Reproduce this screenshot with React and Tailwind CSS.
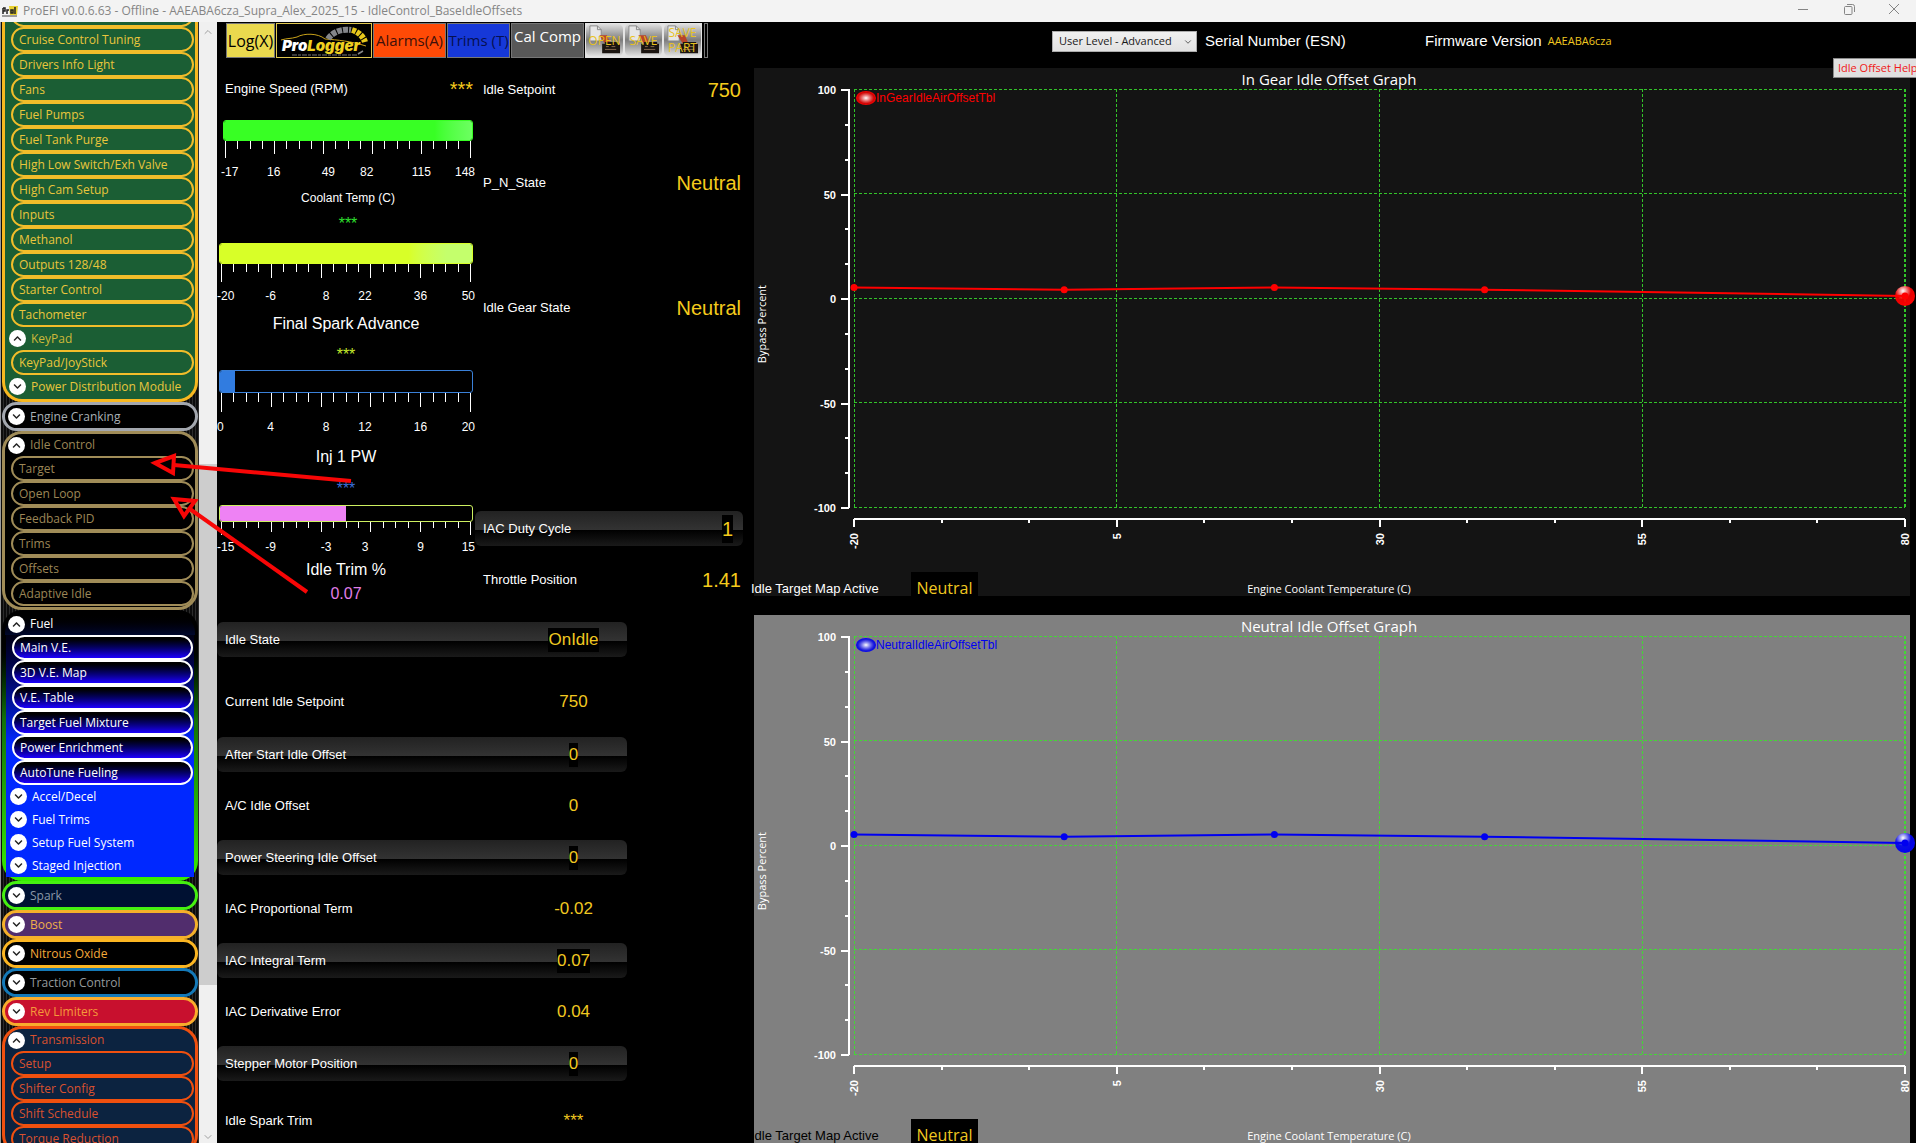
import React, { useState } from "react";
import clsx from "clsx";
import { FaChevronDown, FaChevronUp } from "react-icons/fa";
import { ChevronDown, ChevronUp } from "lucide-react";

const SEGOE = "font-['Open_Sans','Noto_Sans',sans-serif]";
const ARIAL = "font-['Liberation_Sans',Arial,sans-serif]";

const GREEN = {
  box: "border-[#f8b820] bg-[#1b5e34]",
  header: "text-[#cdb93a]",
  pill: "border-[#f2bd2a] text-[#e9c63c]",
};
const TAN = {
  box: "border-[#a08c58] bg-black",
  header: "text-[#9c8656]",
  pill: "border-[#a08c58] text-[#9c8656]",
};
const FUEL = {
  header: "text-white",
  pill: "border-white bg-linear-to-b from-black to-[#1c00ff] text-white",
};
const TRANS = {
  box: "border-[#f0500f] bg-[#0c2340]",
  header: "text-[#d9512f]",
  pill: "border-[#f0500f] text-[#d9512f]",
};

const TEMPS = [-20, 5, 30, 55, 80];
const IDLE_OFFSETS = [
  [-20, 5],
  [0, 4],
  [20, 5],
  [40, 4],
  [80, 1],
];

const GAUGES = [
  {
    title: "Coolant Temp (C)",
    value: "***",
    labels: ["-17", "16", "49", "82", "115", "148"],
    fill: 100,
    inset: "ml-1.5 mr-0.5",
    bar: "h-[21px] border-[#38ff24]",
    fillColor: "bg-linear-to-r from-[#38ff24] from-85% to-[#6cff60]",
    ticks: 17,
    labelRow: "h-7 pl-1",
    titleRow: "h-6 pl-1 text-xs",
    valueRow: "h-7 mb-[5px] pl-1 text-[#2fe02f]",
  },
  {
    title: "Final Spark Advance",
    value: "***",
    labels: ["-20", "-6", "8", "22", "36", "50"],
    fill: 100,
    inset: "mx-0.5",
    bar: "h-[21px] border-[#d8ff28]",
    fillColor: "bg-linear-to-r from-[#d8ff28] from-75% to-[#c4ff6c] to-90%",
    ticks: 18,
    labelRow: "h-[27px]",
    titleRow: "h-[30px] text-base",
    valueRow: "h-[31px] text-[#c4e82c]",
  },
  {
    title: "Inj 1 PW",
    value: "***",
    labels: ["0", "4", "8", "12", "16", "20"],
    fill: 6,
    inset: "mx-0.5",
    bar: "h-[23px] border-[#3a80d8]",
    fillColor: "bg-[#317ce0]",
    ticks: 19,
    labelRow: "h-[30px]",
    titleRow: "h-[30px] text-base",
    valueRow: "h-[33px] text-[#3a6fd8]",
  },
  {
    title: "Idle Trim %",
    value: "0.07",
    labels: ["-15", "-9", "-3", "3", "9", "15"],
    fill: 50,
    inset: "mx-0.5",
    bar: "h-[17px] border-[#cdf060]",
    fillColor: "bg-[#ee82f4]",
    ticks: 13,
    labelRow: "h-[23px]",
    titleRow: "h-6 text-base",
    valueRow: "h-6 text-[#e07ee8]",
  },
];

const READOUTS = [
  { label: "Idle State", value: "OnIdle", band: true },
  { label: "Current Idle Setpoint", value: "750", height: "h-20 pt-2.5" },
  { label: "After Start Idle Offset", value: "0", band: true },
  { label: "A/C Idle Offset", value: "0", height: "h-17" },
  { label: "Power Steering Idle Offset", value: "0", band: true },
  { label: "IAC Proportional Term", value: "-0.02", height: "h-17" },
  { label: "IAC Integral Term", value: "0.07", band: true },
  { label: "IAC Derivative Error", value: "0.04", height: "h-17" },
  { label: "Stepper Motor Position", value: "0", band: true },
  { label: "Idle Spark Trim", value: "***", height: "h-20" },
];

const BAND =
  "bg-[linear-gradient(to_bottom,#222_0,#333_19px,#000_19px,#1a1a1a_100%)]";

const Circle = ({ open }) => (
  <span className="flex size-[17px] shrink-0 items-center justify-center rounded-full bg-white text-[#222]">
    {open ? <FaChevronUp size={9} /> : <FaChevronDown size={9} />}
  </span>
);

const Pill = ({ theme, children }) => (
  <button
    className={clsx(
      "ml-1.5 mr-px flex h-[25px] items-center rounded-full border-2 pl-1.5 text-left",
      theme.pill
    )}
  >
    {children}
  </button>
);

const SubHeader = ({ open, color, children }) => (
  <button
    aria-expanded={!!open}
    className={clsx("flex h-[23px] items-center gap-[5px] pl-1 text-left", color)}
  >
    <Circle open={open} />
    {children}
  </button>
);

const GroupHeader = ({ color, children }) => (
  <button
    aria-expanded="true"
    className={clsx(
      "flex h-[22px] shrink-0 items-center gap-[5px] pl-[3px] text-left",
      color
    )}
  >
    <Circle open />
    {children}
  </button>
);

const Collapsed = ({ color, children }) => (
  <button
    aria-expanded="false"
    className={clsx(
      "flex h-[29px] shrink-0 items-center gap-[5px] rounded-full border-3 pl-[3px] text-left",
      color
    )}
  >
    <Circle />
    {children}
  </button>
);

const Group = ({ theme, title, items }) => (
  <div
    className={clsx(
      "flex shrink-0 flex-col rounded-[20px] border-3 pb-px",
      theme.box
    )}
  >
    <GroupHeader color={theme.header}>{title}</GroupHeader>
    {items.map((item) => (
      <Pill key={item} theme={theme}>
        {item}
      </Pill>
    ))}
  </div>
);

const Sidebar = () => (
  <nav
    className={clsx(
      SEGOE,
      "flex w-[199px] shrink-0 flex-col overflow-hidden border-l border-[#9a9a9a] pl-px pr-px text-xs",
      "bg-[repeating-linear-gradient(to_right,#0c0c0c_0,#0c0c0c_2px,#2c2c2c_2px,#2c2c2c_3px)]"
    )}
  >
    <div
      className={clsx(
        "-mt-5 flex shrink-0 flex-col rounded-b-[20px] border-3 border-t-0 pb-px",
        GREEN.box
      )}
    >
      <Pill theme={GREEN} />
      {[
        "Cruise Control Tuning",
        "Drivers Info Light",
        "Fans",
        "Fuel Pumps",
        "Fuel Tank Purge",
        "High Low Switch/Exh Valve",
        "High Cam Setup",
        "Inputs",
        "Methanol",
        "Outputs 128/48",
        "Starter Control",
        "Tachometer",
      ].map((item) => (
        <Pill key={item} theme={GREEN}>
          {item}
        </Pill>
      ))}
      <SubHeader open color={GREEN.header}>
        KeyPad
      </SubHeader>
      <Pill theme={GREEN}>KeyPad/JoyStick</Pill>
      <SubHeader color="text-[#e9c63c]">Power Distribution Module</SubHeader>
    </div>

    <Collapsed color="border-[#a3a7ae] bg-black text-[#a9b0b6]">
      Engine Cranking
    </Collapsed>
    <Group
      theme={TAN}
      title="Idle Control"
      items={["Target", "Open Loop", "Feedback PID", "Trims", "Offsets", "Adaptive Idle"]}
    />

    {/* Fuel: the frame fades from black to green behind a square blue list */}
    <div className="flex shrink-0 flex-col rounded-[20px] bg-linear-to-b from-black from-10% via-[#127008] via-40% to-[#38f000] p-[3px] pb-1">
      <div className="rounded-t-[20px] bg-linear-to-b from-black to-[#00082c]">
        <GroupHeader color={FUEL.header}>Fuel</GroupHeader>
      </div>
      <div className="mx-px flex flex-col bg-linear-to-b from-[#000014] to-[#0028ff] to-45%">
        {[
          "Main V.E.",
          "3D V.E. Map",
          "V.E. Table",
          "Target Fuel Mixture",
          "Power Enrichment",
          "AutoTune Fueling",
        ].map((item) => (
          <Pill key={item} theme={FUEL}>
            {item}
          </Pill>
        ))}
        {["Accel/Decel", "Fuel Trims", "Setup Fuel System", "Staged Injection"].map(
          (item) => (
            <SubHeader key={item} color="text-white">
              {item}
            </SubHeader>
          )
        )}
      </div>
    </div>

    <Collapsed color="border-[#46f010] bg-[#001132] text-[#8b98a8]">Spark</Collapsed>
    <Collapsed color="border-[#f5b02a] bg-[#512d6d] text-[#efb04a]">Boost</Collapsed>
    <Collapsed color="border-[#fbb522] bg-black text-[#f5a93a]">Nitrous Oxide</Collapsed>
    <Collapsed color="border-[#1479b8] bg-black text-[#959a9c]">Traction Control</Collapsed>
    <Collapsed color="border-[#f9ac2c] bg-[#c8102e] text-[#f59a3a]">Rev Limiters</Collapsed>
    <Group
      theme={TRANS}
      title="Transmission"
      items={["Setup", "Shifter Config", "Shift Schedule", "Torque Reduction"]}
    />
  </nav>
);

const ScrollTrack = () => (
  <div className="flex w-[18px] shrink-0 flex-col items-center bg-[#f0f0f0] text-[#a0a0a0]">
    <ChevronUp size={12} className="mt-1 shrink-0" />
    <div className="mt-[426px] h-[521px] w-full shrink-0 bg-[#cdcdcd]" />
    <ChevronDown size={12} className="mt-auto shrink-0" />
  </div>
);

const ProLogger = () => (
  <svg viewBox="0 0 92 31" className="h-[31px] w-[92px]">
    <path
      d="M3 15 C10 13 12 14 19 12 C26 8 40 8 47 14 C60 15 72 16 88 21"
      fill="none"
      stroke="#c9a21a"
      strokeWidth="1"
    />
    <path
      d="M50 14 A21 17 0 0 1 73 5"
      fill="none"
      stroke="#84868a"
      strokeWidth="6"
      strokeDasharray="5 1"
    />
    <path
      d="M74 5 A21 17 0 0 1 87 17"
      fill="none"
      stroke="#e8c81c"
      strokeWidth="6"
      strokeDasharray="4 1"
    />
    <text
      x="4"
      y="26"
      fontSize="15"
      fontWeight="900"
      fontStyle="italic"
      fontFamily="Inter, sans-serif"
      fill="#fff"
    >
      Pro<tspan fill="#f0d020">Logger</tspan>
    </text>
    <path d="M14 30H80" stroke="#777" strokeWidth="1" strokeDasharray="5 1 3 1" />
    <path d="M80 29 l5 -3" stroke="#888" strokeWidth="1.500" />
  </svg>
);

const FileButton = ({ lines }) => (
  <button className="relative h-[34px] w-[39px] rounded-md border border-[#e4e4e4] bg-linear-to-b from-[#e0e0e0] via-[#7c7c7c] to-[#e0e0e0]">
    <svg viewBox="0 0 39 34" className="absolute inset-0 size-full">
      <path d="M4 2h8l4 4v12H4z" fill="#e6e6e6" stroke="#888" />
      <path d="M12 2v4h4" fill="none" stroke="#888" />
      <path d="M14 12h8l4 9h-6z" fill="#b8442a" />
      <path d="M17 21h3v-2h14v2h2v10H17z" fill="#1a1410" />
      <path d="M20 27h12M21 24h3M27 24h4" stroke="#8a6a50" />
    </svg>
    <span className="relative flex flex-col items-center text-xs leading-[15px] text-[#e8c21e]">
      {lines.map((line) => (
        <span key={line}>{line}</span>
      ))}
    </span>
  </button>
);

const Toolbar = () => (
  <div className={clsx(SEGOE, "flex h-9 gap-px whitespace-nowrap pl-[9px] pt-px text-base")}>
    <button className="w-[49px] border border-[#777] bg-[#ead94e] text-black">Log(X)</button>
    <button
      aria-label="ProLogger"
      className="flex w-24 items-center justify-center border border-[#e0c850] bg-black"
    >
      <ProLogger />
    </button>
    <button className="w-[73px] border border-[#777] bg-[#ff4a06] text-[15px] text-[#40100a]">
      Alarms(A)
    </button>
    <button className="w-[63px] border border-[#777] bg-[#1638d8] text-[15px] text-[#061050]">
      Trims (T)
    </button>
    <button className="flex w-[73px] items-start justify-center border border-[#777] bg-[#585858] pt-px text-[15px] text-white">
      Cal Comp
    </button>
    <div className="flex bg-[#e4e4e4]">
      <FileButton lines={["OPEN"]} />
      <FileButton lines={["SAVE"]} />
      <FileButton lines={["SAVE", "PART"]} />
    </div>
    <div className="ml-px w-1 border border-[#777]" />
  </div>
);

const Ticks = ({ height }) => (
  <svg className="block w-full" style={{ height }}>
    {Array.from({ length: 21 }, (_, i) => {
      const end = i === 0 || i === 20;
      const len = end ? height : i % 4 === 0 ? height * 0.75 : height * 0.45;
      const x = `${1 + i * 4.9}%`;
      return (
        <line
          key={i}
          x1={x}
          x2={x}
          y1="0"
          y2={len}
          stroke="#fff"
          shapeRendering="crispEdges"
        />
      );
    })}
  </svg>
);

const Gauge = ({ gauge }) => (
  <section aria-label={gauge.title} className="text-white">
    <div className={gauge.inset}>
      <div className={clsx("overflow-hidden rounded-[3px] border", gauge.bar)}>
        <div
          className={clsx("h-full", gauge.fillColor)}
          style={{ width: `${gauge.fill}%` }}
        />
      </div>
      <Ticks height={gauge.ticks} />
    </div>
    <div
      className={clsx(
        "grid grid-cols-[minmax(0,28fr)_minmax(0,51fr)_minmax(0,60fr)_minmax(0,18fr)_minmax(0,93fr)_minmax(0,8fr)] items-center text-xs",
        gauge.labelRow
      )}
    >
      {gauge.labels.map((label, i) => (
        <span
          key={label}
          className={clsx(
            "flex",
            i === 0 ? "justify-start" : i === 5 ? "justify-end" : "justify-center"
          )}
        >
          {label}
        </span>
      ))}
    </div>
    <h3 className={clsx("flex items-center justify-center", gauge.titleRow)}>
      {gauge.title}
    </h3>
    <output
      className={clsx("flex items-center justify-center text-base", gauge.valueRow)}
    >
      {gauge.value}
    </output>
  </section>
);

const Reading = ({ label, value, className }) => (
  <div className={clsx("flex items-center justify-between pl-2", className)}>
    <span className="text-[13px] text-white">{label}</span>
    <output className="bg-black text-xl text-[#f5cb1c]">{value}</output>
  </div>
);

const ReadoutTable = () => (
  <table className="w-[410px] border-separate border-spacing-0">
    <tbody>
      {READOUTS.map(({ label, value, band, height }) => (
        <tr key={label}>
          <th
            scope="row"
            className={clsx(
              "py-0 pl-2 text-left text-[13px] font-normal text-white",
              band ? ["h-[35px] rounded-l-md", BAND] : height
            )}
          >
            {label}
          </th>
          <td
            className={clsx(
              "w-[107px] py-0 text-center text-[17px] text-[#f0c820]",
              band ? ["h-[35px] rounded-r-md", BAND] : height
            )}
          >
            <span className="inline-block bg-black leading-6">{value}</span>
          </td>
        </tr>
      ))}
    </tbody>
  </table>
);

const LeftPane = () => (
  <div className={clsx(ARIAL, "w-[535px] shrink-0")}>
    <Toolbar />
    <div className="flex h-[564px]">
      <div className="w-[258px]">
        <div className="flex h-[62px] items-center justify-between pl-2 pr-0.5">
          <span className="text-[13px] text-white">Engine Speed (RPM)</span>
          <output className="text-xl text-[#f5cb1c]">***</output>
        </div>
        {GAUGES.map((gauge) => (
          <Gauge key={gauge.title} gauge={gauge} />
        ))}
      </div>
      <div className="w-[268px]">
        <Reading label="Idle Setpoint" value="750" className="h-16 pr-0.5" />
        <Reading label="P_N_State" value="Neutral" className="h-[122px] pr-0.5" />
        <Reading label="Idle Gear State" value="Neutral" className="h-32 pr-0.5" />
        <Reading
          label="IAC Duty Cycle"
          value="1"
          className={clsx("mt-[139px] h-[35px] rounded-md pr-2.5", BAND)}
        />
        <Reading label="Throttle Position" value="1.41" className="h-17 pr-0.5" />
      </div>
    </div>
    <ReadoutTable />
  </div>
);

const yPos = (v) => (100 - v) * 2.09;
const xPos = (t) => `${t + 20}%`;

const YAxis = () => (
  <svg className="h-[483px] w-[84px] shrink-0 overflow-visible">
    <line x1="79" x2="79" y1="0" y2="419" stroke="#fff" strokeWidth="2" />
    {Array.from({ length: 13 }, (_, i) => {
      const y = Math.round((i * 418) / 12) + 1;
      return (
        <line
          key={i}
          x1={i % 3 === 0 ? 71 : 75}
          x2="79"
          y1={y}
          y2={y}
          stroke="#fff"
          strokeWidth="2"
          shapeRendering="crispEdges"
        />
      );
    })}
    {[100, 50, 0, -50, -100].map((v) => (
      <text
        key={v}
        x="66"
        y={yPos(v) + 5}
        textAnchor="end"
        fontSize="11"
        fontWeight="700"
        fill="#fff"
      >
        {v}
      </text>
    ))}
  </svg>
);

const Plot = ({ id, series, color, grid }) => (
  <svg className="h-[483px] min-w-0 flex-1 overflow-visible">
    <defs>
      <radialGradient id={`${id}-legend`}>
        <stop offset="0" stopColor="#fff" />
        <stop offset="0.8" stopColor={color} stopOpacity="0.8" />
        <stop offset="1" stopColor={color} />
      </radialGradient>
      <radialGradient id={`${id}-marker`} cx="0.4" cy="0.25" r="0.8">
        <stop offset="0" stopColor="#fff" />
        <stop offset="0.5" stopColor={color} stopOpacity="0.9" />
        <stop offset="1" stopColor={color} />
      </radialGradient>
    </defs>

    {/* Grid */}
    <g stroke={grid} strokeDasharray="3 2" shapeRendering="crispEdges">
      {[100, 50, 0, -50, -100].map((v) => (
        <line key={v} x1="0" x2="100%" y1={yPos(v)} y2={yPos(v)} />
      ))}
      {TEMPS.map((t) => (
        <line
          key={t}
          x1={xPos(t)}
          x2={xPos(t)}
          y1="0"
          y2="418"
          strokeWidth={t === 80 ? 2 : 1}
        />
      ))}
    </g>

    {/* Temperature axis */}
    <g stroke="#fff" strokeWidth="2" shapeRendering="crispEdges">
      <line x1="0" x2="100%" y1="430" y2="430" />
      {Array.from({ length: 13 }, (_, i) => {
        const x = `${(i * 100) / 12}%`;
        return <line key={i} x1={x} x2={x} y1="430" y2={i % 3 === 0 ? 438 : 434} />;
      })}
    </g>
    {TEMPS.map((t) => (
      <svg key={t} x={xPos(t)} y="444" className="overflow-visible">
        <text
          transform="rotate(-90)"
          x="0"
          y="4"
          textAnchor="end"
          fontSize="11"
          fontWeight="700"
          fill="#fff"
        >
          {t}
        </text>
      </svg>
    ))}

    {/* Series */}
    <ellipse
      cx="100%"
      cy={yPos(1)}
      rx="10"
      ry="10"
      fill={`url(#${id}-marker)`}
    />
    {IDLE_OFFSETS.slice(1).map(([t, v], i) => (
      <line
        key={t}
        x1={xPos(IDLE_OFFSETS[i][0])}
        y1={yPos(IDLE_OFFSETS[i][1])}
        x2={xPos(t)}
        y2={yPos(v)}
        stroke={color}
        strokeWidth="2"
      />
    ))}
    {IDLE_OFFSETS.map(([t, v]) => (
      <circle key={t} cx={xPos(t)} cy={yPos(v)} r="3.500" fill={color} />
    ))}

    <ellipse cx="12" cy="9" rx="10" ry="7" fill={`url(#${id}-legend)`} />
    <text x="22" y="13" fontSize="12" fill={color}>
      {series}
    </text>
  </svg>
);

const OffsetChart = ({ id, title, series, color, grid, panel, label }) => (
  <section className={clsx(ARIAL, "ml-0.5 mr-1.5", panel)}>
    <h2
      className={clsx(
        SEGOE,
        "h-[21px] pr-1.5 text-center text-[15px] leading-[22px] text-white"
      )}
    >
      {title}
    </h2>
    <div className="flex pr-[5px]">
      <div
        className={clsx(
          SEGOE,
          "flex w-4 shrink-0 items-center justify-center pb-3 text-[11px] font-medium text-white"
        )}
      >
        <span className="rotate-180 whitespace-nowrap [writing-mode:vertical-rl]">
          Bypass Percent
        </span>
      </div>
      <YAxis />
      <Plot id={id} series={series} color={color} grid={grid} />
    </div>
    <div className="grid h-6 grid-cols-[1fr_auto_1fr] items-end pr-1.5">
      <div className="-ml-[3px] flex h-6 items-center">
        <span className={clsx("w-40 pt-2.5 text-[13px] leading-4", label)}>
          Idle Target Map Active
        </span>
        <output
          className={clsx(
            SEGOE,
            "h-6 w-[67px] bg-black pt-1.5 text-center text-base leading-5 text-[#f0c820]"
          )}
        >
          Neutral
        </output>
      </div>
      <span className={clsx(SEGOE, "text-[11px] leading-[15px] text-white")}>
        Engine Coolant Temperature (C)
      </span>
    </div>
  </section>
);

const RightPane = () => {
  const [level, setLevel] = useState("Advanced");

  return (
    <div className="relative min-w-0 flex-1">
      <header
        className={clsx(
          ARIAL,
          "flex h-[46px] items-center pb-2 pl-[300px] text-[15px] text-white"
        )}
      >
        <div className="relative">
          <select
            aria-label="User level"
            value={level}
            onChange={(e) => setLevel(e.target.value)}
            className={clsx(
              SEGOE,
              "block h-[21px] w-[145px] appearance-none border border-[#acacac] bg-linear-to-b from-[#f0f0f0] to-[#e2e2e2] pl-1.5 text-[11px] leading-4 text-[#1a1a1a]"
            )}
          >
            <option value="Advanced">User Level - Advanced</option>
            <option value="Basic">User Level - Basic</option>
          </select>
          <ChevronDown
            size={10}
            className="pointer-events-none absolute right-1 top-1.5 text-[#444]"
          />
        </div>
        <span className="ml-2 w-[220px]">Serial Number (ESN)</span>
        <span>Firmware Version</span>
        <span className={clsx(SEGOE, "ml-1.5 text-[11px] text-[#f0c820]")}>AAEABA6cza</span>
      </header>
      <OffsetChart
        id="gear"
        title="In Gear Idle Offset Graph"
        series="InGearIdleAirOffsetTbl"
        color="#ff0000"
        grid="#33c42a"
        panel="bg-[#141414]"
        label="text-white"
      />
      <div className="h-[19px]" />
      <OffsetChart
        id="neutral"
        title="Neutral Idle Offset Graph"
        series="NeutralIdleAirOffsetTbl"
        color="#0000f0"
        grid="#43d835"
        panel="bg-[#808080]"
        label="text-black"
      />
      <button
        className={clsx(
          SEGOE,
          "absolute -right-2 top-9 h-5 w-[91px] whitespace-nowrap border border-[#8a8a8a] bg-[#e0e0e0] pl-1 text-left text-[11px] leading-4 text-[#f01818]"
        )}
      >
        Idle Offset Help
      </button>
    </div>
  );
};

const TitleBar = () => (
  <div
    className={clsx(
      SEGOE,
      "flex h-[22px] shrink-0 items-center bg-[#f3f3f3] pl-0.5 text-xs text-[#858585]"
    )}
  >
    <svg viewBox="0 0 16 12" className="mr-[5px] h-3 w-4">
      <path d="M7 1h9l-1 9H8z" fill="#e8d030" />
      <path d="M1 3v6M1 3h2v3H1M5 9V5h2M9 5h2v3H9zM13 2v7" fill="none" stroke="#222" strokeWidth="1.500" />
      <path d="M0 11h15" stroke="#444" />
    </svg>
    <span>
      ProEFI v0.0.6.63 - Offline - AAEABA6cza_Supra_Alex_2025_15 -
      IdleControl_BaseIdleOffsets
    </span>
    <div className="ml-auto flex h-full pb-1">
      <button aria-label="Minimize" className="flex w-[46px] items-center justify-center">
        <svg viewBox="0 0 10 10" className="size-2.5" stroke="#858585">
          <path d="M0 5.500h10" />
        </svg>
      </button>
      <button aria-label="Restore" className="flex w-[46px] items-center justify-center">
        <svg viewBox="0 0 11 11" className="size-[11px]" fill="none" stroke="#858585">
          <rect x="0.500" y="2.500" width="7.500" height="8" rx="1" />
          <path d="M3 0.500h5.500a2 2 0 0 1 2 2V8" />
        </svg>
      </button>
      <button aria-label="Close" className="flex w-[44px] items-center justify-center">
        <svg viewBox="0 0 10 10" className="size-2.5" stroke="#858585">
          <path d="M0 0l10 10M10 0L0 10" />
        </svg>
      </button>
    </div>
  </div>
);

// Red arrows pointing at the Target and Open Loop pages
const Arrows = () => (
  <svg
    className="pointer-events-none absolute left-0 top-0 h-[620px] w-[400px]"
    fill="none"
    stroke="#f80606"
    strokeWidth="4"
  >
    <path d="M351 481 L174 465" />
    <path d="M155 463 L174 456 L173 473 Z" />
    <path d="M307 592 L190 509" />
    <path d="M174 499 L195 501 L184 516 Z" />
  </svg>
);

const App = () => (
  <div className="relative flex h-screen flex-col overflow-hidden bg-black">
    <TitleBar />
    <div className="flex min-h-0 flex-1 overflow-hidden">
      <Sidebar />
      <ScrollTrack />
      <LeftPane />
      <RightPane />
    </div>
    <Arrows />
  </div>
);

export default App;
